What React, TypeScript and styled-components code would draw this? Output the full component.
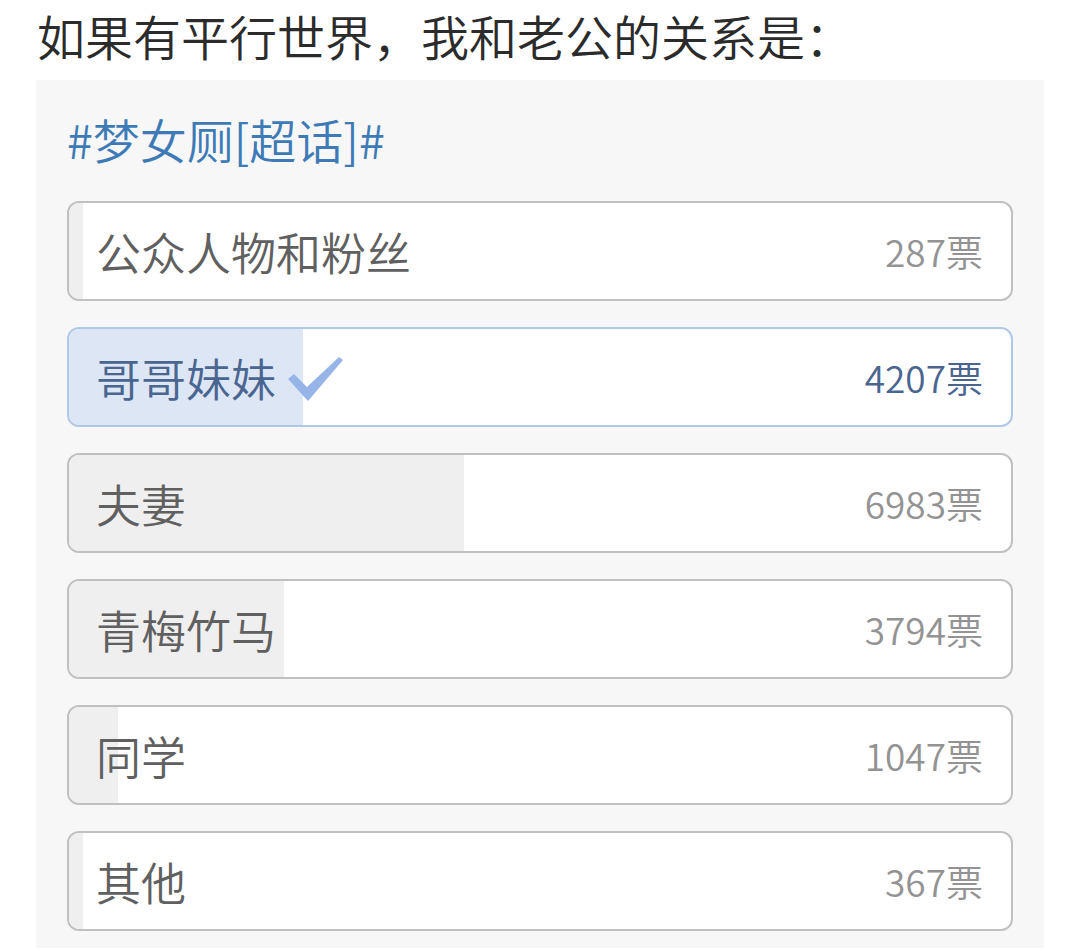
import styled, { createGlobalStyle } from 'styled-components'

const GlobalStyle = createGlobalStyle`
  body {
    margin: 0;
    background: #ffffff;
    font-family: "Noto Sans CJK SC", "Noto Sans", sans-serif;
    font-weight: 350;
  }
`

const Page = styled.div`
  padding: 0 36px;
  width: 1080px;
  box-sizing: border-box;
`

const Title = styled.h1`
  margin: 0;
  padding: 4px 0 0 1px;
  height: 76px;
  font-size: 48px;
  line-height: 62px;
  font-weight: 350;
  color: #2b2b2b;
  white-space: nowrap;
`

const Panel = styled.section`
  background: #f7f7f7;
  padding: 26px 31px 17px;
  display: flex;
  flex-direction: column;
  gap: 29px;
`

const Topic = styled.div`
  font-size: 47px;
  line-height: 66px;
  color: #3e7bb6;
`

const Options = styled.div`
  display: flex;
  flex-direction: column;
  gap: 26px;
`

const Option = styled.div<{ $selected?: boolean }>`
  position: relative;
  height: 100px;
  box-sizing: border-box;
  border: 2px solid ${(p) => (p.$selected ? '#b0c8e8' : '#c0c0c0')};
  border-radius: 12px;
  background: #ffffff;
  overflow: hidden;
  display: flex;
  align-items: center;
  justify-content: space-between;
  padding: 0 28px 0 27px;
`

const Fill = styled.div<{ $selected?: boolean }>`
  position: absolute;
  top: 0;
  bottom: 0;
  left: 0;
  background: ${(p) => (p.$selected ? '#dce6f5' : '#efefef')};
`

const Label = styled.span<{ $selected?: boolean }>`
  position: relative;
  display: flex;
  align-items: center;
  gap: 10px;
  font-size: 45px;
  color: ${(p) => (p.$selected ? '#4a6590' : '#606060')};
`

const Count = styled.span<{ $selected?: boolean }>`
  position: relative;
  font-size: 37px;
  color: ${(p) => (p.$selected ? '#4a6590' : '#939393')};
`

const Check = () => (
  <svg width="58" height="46" viewBox="0 0 58 46" style={{ marginTop: 4 }}>
    <path d="M2 23 L8 18 L21 31 L53 1 L57 4 L22 45 Z" fill="#96b4e8" />
  </svg>
)

const options = [
  { label: '公众人物和粉丝', votes: 287, fill: 1.5 },
  { label: '哥哥妹妹', votes: 4207, fill: 24.8, selected: true },
  { label: '夫妻', votes: 6983, fill: 41.9 },
  { label: '青梅竹马', votes: 3794, fill: 22.8 },
  { label: '同学', votes: 1047, fill: 5.2 },
  { label: '其他', votes: 367, fill: 1.5 },
]

export default function App() {
  return (
    <Page>
      <GlobalStyle />
      <Title>如果有平行世界，我和老公的关系是：</Title>
      <Panel>
        <Topic>#梦女厕[超话]#</Topic>
        <Options>
          {options.map((o) => (
            <Option key={o.label} $selected={o.selected}>
              <Fill $selected={o.selected} style={{ width: `${o.fill}%` }} />
              <Label $selected={o.selected}>
                {o.label}
                {o.selected && <Check />}
              </Label>
              <Count $selected={o.selected}>{o.votes}票</Count>
            </Option>
          ))}
        </Options>
      </Panel>
    </Page>
  )
}
